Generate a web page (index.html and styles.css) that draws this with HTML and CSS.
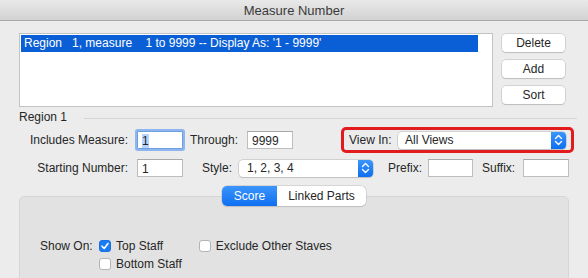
FILE: index.html
```html
<!DOCTYPE html>
<html lang="en">
<head>
    <meta charset="UTF-8">
    <meta name="viewport" content="width=device-width, initial-scale=1.0">
    <title>Measure Number</title>
    <link rel="stylesheet" href="styles.css">
</head>
<body>
    <div class="window">
        <header class="titlebar">Measure Number</header>
        <div class="top">
            <div class="list">
                <div class="list-row selected">Region   1, measure    1 to 9999 -- Display As: '1 - 9999'</div>
            </div>
            <div class="buttons">
                <button type="button">Delete</button>
                <button type="button">Add</button>
                <button type="button">Sort</button>
            </div>
        </div>
        <div class="section-title">
            <span>Region 1</span>
            <div class="rule"></div>
        </div>
        <div class="row row-one">
            <span class="label label-wide">Includes Measure:</span>
            <div class="field focused"><span class="sel-text">1</span></div>
            <span class="label label-through">Through:</span>
            <div class="field">9999</div>
            <div class="highlight">
                <span class="label label-view">View In:</span>
                <div class="select select-view">
                    <span>All Views</span>
                    <div class="stepper">
                        <svg width="9" height="12" viewBox="0 0 9 12"><path d="M1.5 4.5 L4.5 1.5 L7.5 4.5 M1.5 7.5 L4.5 10.5 L7.5 7.5" fill="none" stroke="#fff" stroke-width="1.4" stroke-linecap="round" stroke-linejoin="round"/></svg>
                    </div>
                </div>
            </div>
        </div>
        <div class="row row-two">
            <span class="label label-wide">Starting Number:</span>
            <div class="field">1</div>
            <span class="label label-style">Style:</span>
            <div class="select select-style">
                <span>1, 2, 3, 4</span>
                <div class="stepper">
                    <svg width="9" height="12" viewBox="0 0 9 12"><path d="M1.5 4.5 L4.5 1.5 L7.5 4.5 M1.5 7.5 L4.5 10.5 L7.5 7.5" fill="none" stroke="#fff" stroke-width="1.4" stroke-linecap="round" stroke-linejoin="round"/></svg>
                </div>
            </div>
            <span class="label label-prefix">Prefix:</span>
            <div class="field field-short"></div>
            <span class="label label-suffix">Suffix:</span>
            <div class="field"></div>
        </div>
        <div class="tabs">
            <div class="segmented">
                <div class="segment active">Score</div>
                <div class="segment">Linked Parts</div>
            </div>
        </div>
        <div class="group">
            <div class="show-on">
                <span class="label label-show">Show On:</span>
                <div class="checks">
                    <label class="check"><span class="box checked"><svg width="10" height="10" viewBox="0 0 10 10"><path d="M2 5.2 L4.2 7.5 L8 2.5" fill="none" stroke="#fff" stroke-width="1.6" stroke-linecap="round" stroke-linejoin="round"/></svg></span>Top Staff</label>
                    <label class="check"><span class="box"></span>Bottom Staff</label>
                </div>
                <label class="check check-exclude"><span class="box"></span>Exclude Other Staves</label>
            </div>
        </div>
    </div>
</body>
</html>
```

FILE: styles.css
```css
body {
    margin: 0;
    font-family: "Liberation Sans", Arial, sans-serif;
    font-size: 12px;
    color: #262626;
    background: #ececec;
    overflow: hidden;
}
.window {
    width: 588px;
    height: 278px;
    overflow: hidden;
}
.titlebar {
    height: 20px;
    line-height: 21px;
    text-align: center;
    font-size: 13px;
    color: #3a3a3a;
    background: linear-gradient(#e9e9e9, #d2d2d2);
    border-bottom: 1px solid #a9a9a9;
}
.top {
    display: flex;
    padding: 12px 0 0 19px;
}
.list {
    width: 457px;
    height: 71px;
    padding: 1px 14px 0 1px;
    background: #fff;
    border: 1px solid #c3c3c3;
    box-sizing: content-box;
}
.list-row {
    height: 17px;
    line-height: 17px;
    padding-left: 3px;
    white-space: pre;
}
.list-row.selected {
    background: #0b5fd6;
    color: #fff;
}
.buttons {
    display: flex;
    flex-direction: column;
    gap: 8px;
    margin-left: 9px;
    margin-top: 1px;
}
.buttons button {
    width: 63px;
    height: 18px;
    padding: 0;
    font: inherit;
    color: #262626;
    background: #fff;
    border: none;
    border-radius: 4px;
    box-shadow: 0 0 0 0.5px #b9b9b9, 0 1px 1px rgba(0, 0, 0, 0.18);
}
.section-title {
    display: flex;
    align-items: center;
    height: 14px;
    margin-top: 3px;
    padding-left: 19px;
}
.rule {
    flex: 1;
    height: 1px;
    margin: 3px 11px 0 17px;
    background: #d6d6d6;
}
.row {
    display: flex;
    align-items: center;
    padding-left: 19px;
}
.row-one {
    height: 26px;
    margin-top: 3px;
}
.row-two {
    height: 18px;
    margin-top: 6px;
}
.label {
    white-space: nowrap;
}
.label-wide {
    width: 109px;
    text-align: right;
    margin-right: 9px;
}
.label-through {
    width: 57px;
    margin-left: 7px;
}
.label-style {
    width: 37px;
    margin-left: 19px;
}
.label-prefix {
    width: 40px;
    margin-left: 15px;
}
.label-suffix {
    width: 41px;
    margin-left: 9px;
}
.label-view {
    width: 49px;
}
.field {
    width: 46px;
    height: 18px;
    line-height: 18px;
    padding-left: 4px;
    box-sizing: border-box;
    background: #fff;
    border: 1px solid #bdbdbd;
    border-top-color: #a9a9a9;
}
.field-short {
    width: 45px;
}
.field.focused {
    border-color: #6e9fe0;
    box-shadow: 0 0 0 2px #8db6f0;
    border-radius: 1px;
}
.sel-text {
    background: #b3d4fc;
}
.highlight {
    display: flex;
    align-items: center;
    width: 233px;
    height: 26px;
    margin-left: 48px;
    padding: 0 5px 0 5px;
    box-sizing: border-box;
    border: 3px solid #e21c1c;
    border-radius: 5px;
}
.select {
    display: flex;
    align-items: center;
    justify-content: space-between;
    height: 17px;
    padding-left: 8px;
    box-sizing: border-box;
    background: #fff;
    border-radius: 4px;
    box-shadow: 0 0 0 0.5px #b5b5b5, 0 1px 1px rgba(0, 0, 0, 0.15);
}
.select-view {
    width: 168px;
    padding-left: 7px;
}
.select-style {
    width: 134px;
}
.stepper {
    display: flex;
    align-items: center;
    justify-content: center;
    width: 15px;
    height: 17px;
    background: linear-gradient(#3a95fb, #0e6ff0);
    border-radius: 0 4px 4px 0;
}
.tabs {
    display: flex;
    margin: 9px 0 0 222px;
    position: relative;
    z-index: 1;
}
.segmented {
    display: flex;
    height: 20px;
    border-radius: 5px;
    background: #fff;
    box-shadow: 0 0 0 0.5px #bdbdbd, 0 1px 1px rgba(0, 0, 0, 0.15);
    overflow: hidden;
}
.segment {
    line-height: 20px;
    text-align: center;
}
.segment:first-child {
    width: 55px;
}
.segment:last-child {
    width: 89px;
}
.segment.active {
    color: #fff;
    background: linear-gradient(#3c95fb, #0f6ff1);
}
.group {
    width: 548px;
    height: 90px;
    margin: -10px 0 0 19px;
    background: #e2e2e2;
    border: 1px solid #d6d6d6;
    border-radius: 5px;
}
.show-on {
    display: flex;
    align-items: flex-start;
    padding: 43px 0 0 20px;
}
.label-show {
    width: 59px;
    line-height: 12px;
}
.checks {
    display: flex;
    flex-direction: column;
    gap: 6px;
}
.check {
    display: flex;
    align-items: center;
    height: 12px;
    white-space: nowrap;
}
.check-exclude {
    margin-left: 17px;
}
.box {
    display: flex;
    align-items: center;
    justify-content: center;
    width: 12px;
    height: 12px;
    margin-right: 5px;
    box-sizing: border-box;
    background: #fff;
    border: 1px solid #b4b4b4;
    border-radius: 3px;
}
.box.checked {
    background: #1a7cf5;
    border-color: #1a6fe0;
}
```
